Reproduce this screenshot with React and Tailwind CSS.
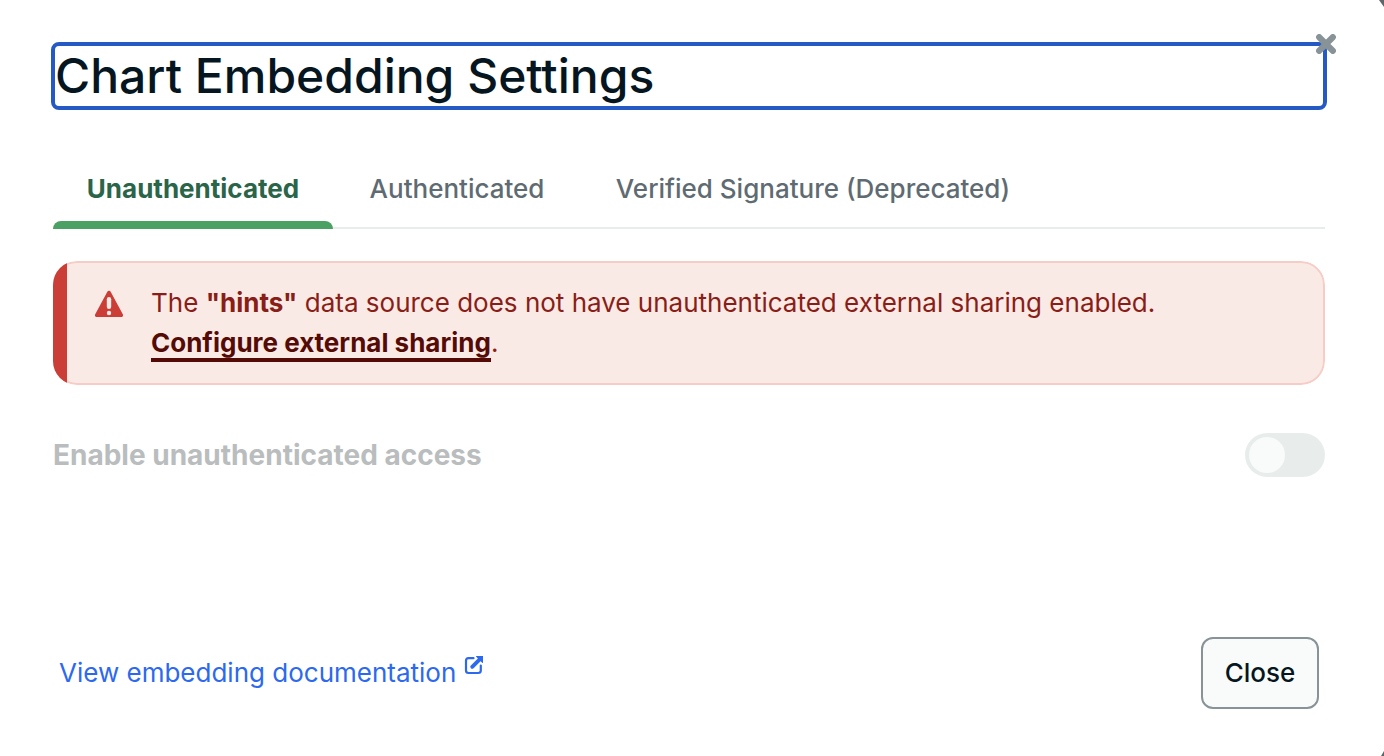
import { useState } from "react";

const tabs = [
  { id: "unauthenticated", label: "Unauthenticated", width: "w-[280px]" },
  { id: "authenticated", label: "Authenticated", width: "w-[248px]" },
  { id: "verified", label: "Verified Signature (Deprecated)", width: "w-[464px]" },
];

function WarningIcon() {
  return (
    <svg className="mt-[7px] h-[28px] w-[30px] shrink-0" viewBox="0 0 30 28" aria-hidden="true">
      <path
        d="M13.2 1.9a2 2 0 0 1 3.6 0l12 22.4a1.9 1.9 0 0 1-1.7 2.8H2.9a1.9 1.9 0 0 1-1.7-2.8z"
        fill="#ca3e37"
      />
      <rect x="12.8" y="7" width="4.4" height="12" rx="2.2" fill="#faeae6" />
      <circle cx="15" cy="23" r="2.2" fill="#faeae6" />
    </svg>
  );
}

function ExternalLinkIcon() {
  return (
    <svg className="mb-4 h-[20px] w-[20px]" viewBox="0 0 20 20" aria-hidden="true">
      <path
        d="M9.5 3.2H4.5Q2 3.2 2 5.7v9.8Q2 18 4.5 18h9.8q2.5 0 2.5-2.5v-5"
        fill="none"
        stroke="currentColor"
        strokeWidth="2.2"
        strokeLinecap="round"
      />
      <path d="M8.2 11.8l8-8" stroke="currentColor" strokeWidth="3.8" strokeLinecap="round" />
      <path d="M12.5 1H19v6.5q0 .9-.8.3L12.2 1.8Q11.5 1 12.5 1z" fill="currentColor" />
    </svg>
  );
}

export default function App() {
  const [active, setActive] = useState("unauthenticated");
  return (
    <main className="relative flex min-h-screen flex-col overflow-hidden bg-white pt-[42px] pr-[57px] pb-[47px] pl-[51px] font-[Inter,sans-serif] text-[26px] leading-[40px] text-[#061621]">
      <svg className="absolute top-0 right-0 h-[8px] w-[5px]" viewBox="0 0 5 8" aria-hidden="true">
        <path d="M0 0h5v7z" fill="#5d676b" />
      </svg>
      <svg className="absolute right-0 bottom-0 h-[6px] w-[4px]" viewBox="0 0 4 6" aria-hidden="true">
        <path d="M1 6h3V1z" fill="#5d676b" />
      </svg>

      <div className="relative">
        <h1 className="rounded-lg border-4 border-[#255ac4] text-[48px] leading-[60px] font-medium">
          Chart Embedding Settings
        </h1>
        <button type="button" aria-label="Close dialog" className="absolute -top-2 -right-[9px] text-[#889397]">
          <svg className="h-[20px] w-[20px]" viewBox="0 0 20 20" aria-hidden="true">
            <path d="M3.2 3.2l13.6 13.6M16.8 3.2L3.2 16.8" stroke="currentColor" strokeWidth="6.2" strokeLinecap="round" />
          </svg>
        </button>
      </div>

      <div role="tablist" className="mx-[2px] mt-10 flex h-[79px] shadow-[inset_0_-2px_0_#e8edeb]">
        {tabs.map((tab) => (
          <button
            key={tab.id}
            type="button"
            role="tab"
            aria-selected={active === tab.id}
            onClick={() => setActive(tab.id)}
            className={`relative flex justify-center pt-[19px] whitespace-nowrap ${tab.width} ${
              active === tab.id ? "font-bold text-[#2a6549]" : "font-medium text-[#5f6b73]"
            }`}
          >
            {tab.label}
            {active === tab.id && (
              <span className="absolute inset-x-0 bottom-0 h-2 rounded-t-lg bg-[#4aa163]" />
            )}
          </button>
        ))}
      </div>

      <div role="alert" className="relative mx-[2px] mt-8 overflow-hidden rounded-[24px]">
        <div className="flex gap-[27px] rounded-[24px] border-2 border-[#f6cdc6] bg-[#faeae6] py-5 pr-6 pl-[39px] text-[#891e18]">
          <WarningIcon />
          <p>
            The <strong className="font-bold">"hints"</strong> data source does not have unauthenticated external sharing enabled.
            <br />
            <a href="#sharing" className="border-b-4 border-[#540b06] font-bold text-[#540b06]">
              Configure external sharing
            </a>
            .
          </p>
        </div>
        <span className="absolute inset-y-0 left-0 w-[14px] bg-[#ca3e37]" />
      </div>

      <div className="mx-[2px] mt-12 flex items-center justify-between">
        <label htmlFor="access" className="text-[28px] font-bold text-[#babdbe]">
          Enable unauthenticated access
        </label>
        <input
          id="access"
          type="checkbox"
          role="switch"
          disabled
          className="h-[44px] w-[80px] appearance-none rounded-full bg-[#e8edeb] p-1 before:block before:h-9 before:w-9 before:rounded-full before:bg-[#f9fbfa]"
        />
      </div>

      <footer className="mx-2 mt-auto flex items-center justify-between">
        <a href="#documentation" className="flex items-center gap-2 text-[#2c69ee]">
          View embedding documentation
          <ExternalLinkIcon />
        </a>
        <button type="button" className="h-[72px] w-[118px] rounded-xl border-2 border-[#889397] bg-[#f9fbfa] font-medium">
          Close
        </button>
      </footer>
    </main>
  );
}
